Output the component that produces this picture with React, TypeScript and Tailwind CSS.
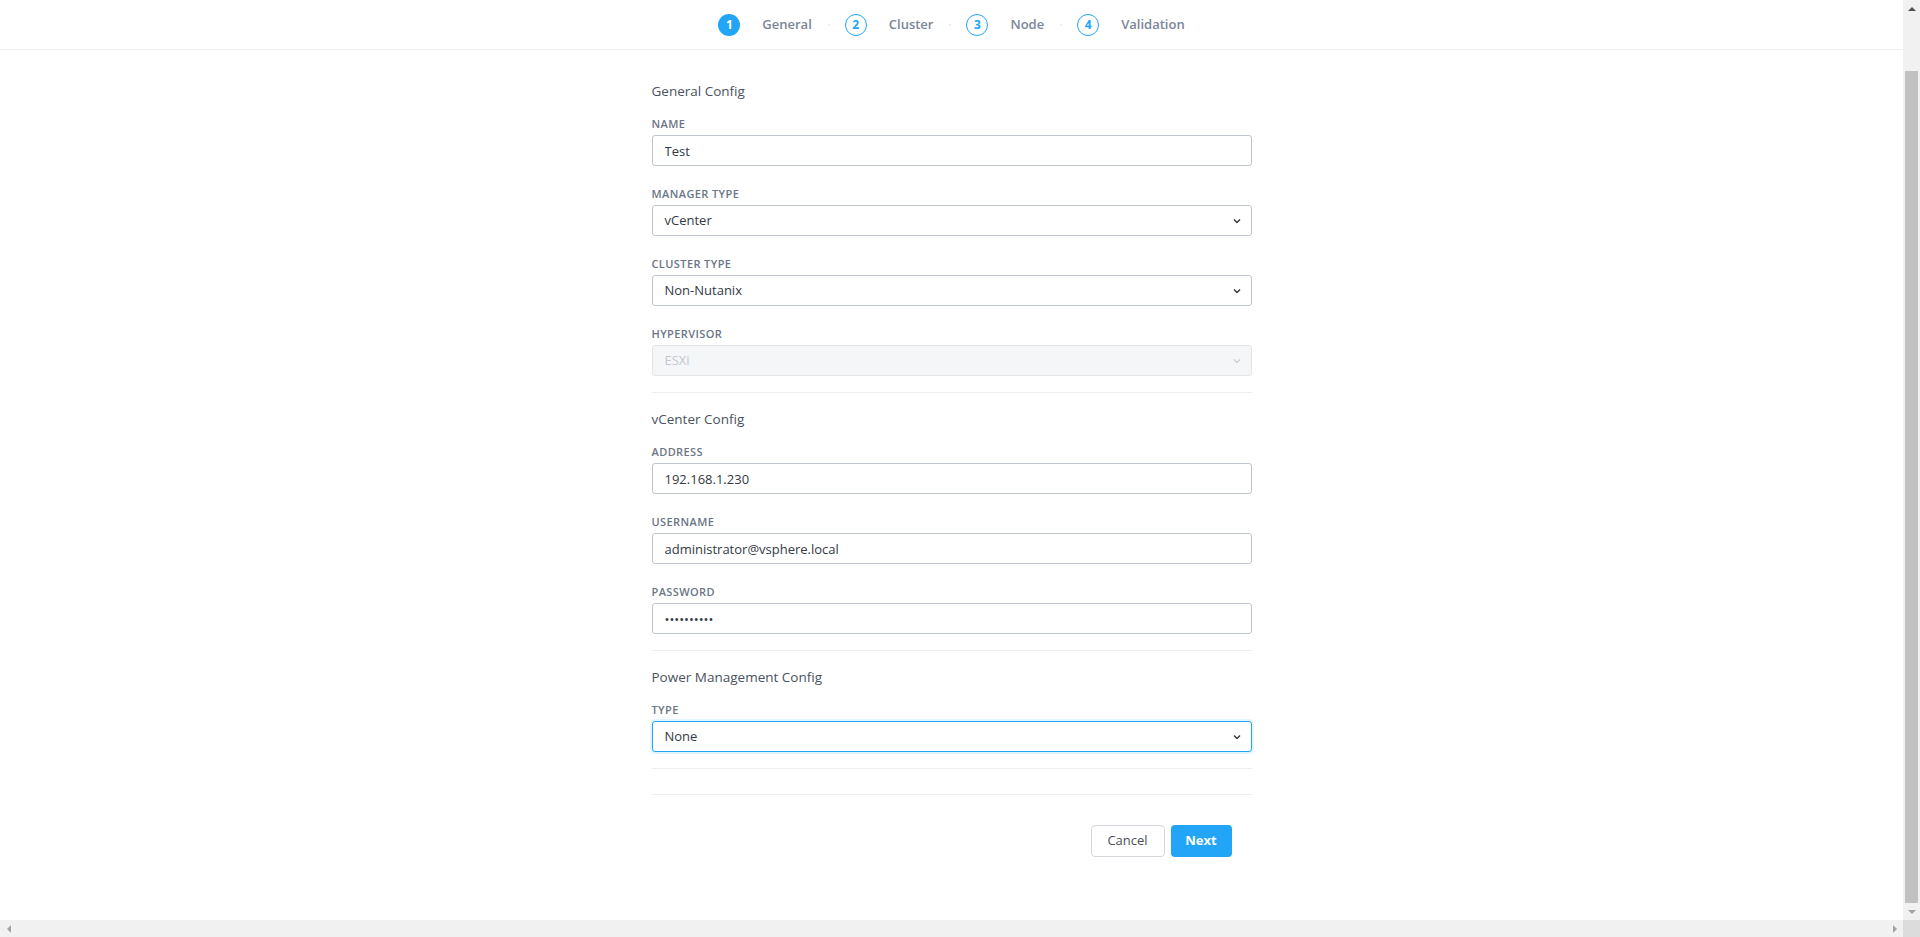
import React from 'react';

const font = { fontFamily: '"Open Sans", Lato, Arial, sans-serif' };

const steps = [
  { n: 1, label: 'General', active: true },
  { n: 2, label: 'Cluster' },
  { n: 3, label: 'Node' },
  { n: 4, label: 'Validation' },
];

function Chevron({ muted }: { muted?: boolean }) {
  return (
    <svg width="8" height="5" viewBox="0 0 8 5" className="absolute right-[10px] top-1/2 -translate-y-1/2 pointer-events-none">
      <path d="M1 1l3 3 3-3" fill="none" stroke={muted ? '#c9ced6' : '#2f3640'} strokeWidth="1.4" />
    </svg>
  );
}

function Label({ children }: { children: React.ReactNode }) {
  return <div className="text-[11px] leading-[16px] font-semibold uppercase tracking-[0.4px] text-[#6b7686] mb-[3px]">{children}</div>;
}

function TextField({ label, value }: { label: string; value: string }) {
  return (
    <div>
      <Label>{label}</Label>
      <input
        type="text"
        defaultValue={value}
        readOnly
        className="block w-full h-[31px] px-[12px] rounded-[3px] border border-[#bfc5cd] bg-white text-[13px] text-[#333a44] outline-none"
        style={font}
      />
    </div>
  );
}

function SelectField({ label, value, disabled, focused }: { label: string; value: string; disabled?: boolean; focused?: boolean }) {
  return (
    <div>
      <Label>{label}</Label>
      <div
        className={
          'relative h-[31px] px-[12px] rounded-[3px] border flex items-center text-[13px] ' +
          (disabled
            ? 'bg-[#f5f6f8] border-[#e1e4e8] text-[#c3c8d0]'
            : focused
            ? 'bg-white border-[#22a5f7] text-[#333a44] shadow-[0_0_0_2px_rgba(34,165,247,0.12)]'
            : 'bg-white border-[#bfc5cd] text-[#333a44]')
        }
      >
        {value}
        <Chevron muted={disabled} />
      </div>
    </div>
  );
}

function Section({ title, children }: { title: string; children: React.ReactNode }) {
  return (
    <div className="pt-[16px] pb-[16px] border-b border-[#eceef1]">
      <div className="text-[13.5px] leading-[20px] text-[#4a525e] mb-[15px]">{title}</div>
      <div className="flex flex-col gap-[20px]">{children}</div>
    </div>
  );
}

function Arrow({ dir, dark }: { dir: 'up' | 'down' | 'left' | 'right'; dark?: boolean }) {
  const d = {
    up: 'M4 1L8 5H0Z',
    down: 'M0 1H8L4 5Z',
    left: 'M5 0V8L1 4Z',
    right: 'M1 0L5 4L1 8Z',
  }[dir];
  const vertical = dir === 'up' || dir === 'down';
  return (
    <div className="w-[17px] h-[17px] flex items-center justify-center shrink-0">
      <svg width={vertical ? 8 : 6} height={vertical ? 6 : 8} viewBox={vertical ? '0 0 8 6' : '0 0 6 8'}>
        <path d={d} fill={dark ? '#505050' : '#a3a3a3'} />
      </svg>
    </div>
  );
}

export default function App() {
  return (
    <div className="h-screen w-full flex flex-col bg-white overflow-hidden" style={font}>
      <div className="flex-1 flex min-h-0">
        <div className="flex-1 min-w-0">
          {/* stepper */}
          <div className="h-[50px] bg-white border-b border-[#eef0f3] flex items-center justify-center">
            {steps.map((s, i) => (
              <div key={s.n} className="flex items-center">
                {i > 0 && <div className="ml-[16px] mr-[15px] w-[2px] h-[2px] rounded-full bg-[#e3e6ea]" />}
                <div
                  className={
                    'w-[22px] h-[22px] rounded-full flex items-center justify-center text-[12px] font-bold ' +
                    (s.active ? 'bg-[#22a5f7] text-white' : 'border-[1.5px] border-[#22a5f7] text-[#22a5f7] bg-white')
                  }
                >
                  {s.n}
                </div>
                <span className="ml-[22px] text-[13px] font-semibold text-[#7b8696]">{s.label}</span>
              </div>
            ))}
          </div>

          <div className="pt-[15px]">
            <div className="w-[600px] mx-auto">
              <Section title="General Config">
                <TextField label="Name" value="Test" />
                <SelectField label="Manager Type" value="vCenter" />
                <SelectField label="Cluster Type" value="Non-Nutanix" />
                <SelectField label="Hypervisor" value="ESXi" disabled />
              </Section>

              <Section title="vCenter Config">
                <TextField label="Address" value="192.168.1.230" />
                <TextField label="Username" value="administrator@vsphere.local" />
                <TextField label="Password" value="••••••••••" />
              </Section>

              <Section title="Power Management Config">
                <SelectField label="Type" value="None" focused />
              </Section>

              <div className="mt-[25px] border-t border-[#eceef1] pt-[30px] pr-[20px] flex justify-end gap-[6px]">
                <button className="h-[32px] w-[74px] rounded-[4px] border border-[#d3d7dd] bg-white text-[13px] text-[#4a4f57]">
                  Cancel
                </button>
                <button className="h-[32px] w-[61px] rounded-[4px] bg-[#22a5f7] text-[13px] font-bold text-white">
                  Next
                </button>
              </div>
            </div>
          </div>
        </div>

        {/* vertical scrollbar */}
        <div className="w-[17px] bg-[#f1f1f1] flex flex-col">
          <Arrow dir="up" dark />
          <div className="flex-1 flex flex-col pt-[54px] px-[2px]">
            <div className="flex-1 bg-[#c1c1c1]" />
          </div>
          <Arrow dir="down" />
        </div>
      </div>

      {/* horizontal scrollbar */}
      <div className="h-[17px] flex">
        <div className="flex-1 bg-[#f1f1f1] flex justify-between">
          <Arrow dir="left" />
          <Arrow dir="right" />
        </div>
        <div className="w-[17px] bg-[#dcdcdc]" />
      </div>
    </div>
  );
}
